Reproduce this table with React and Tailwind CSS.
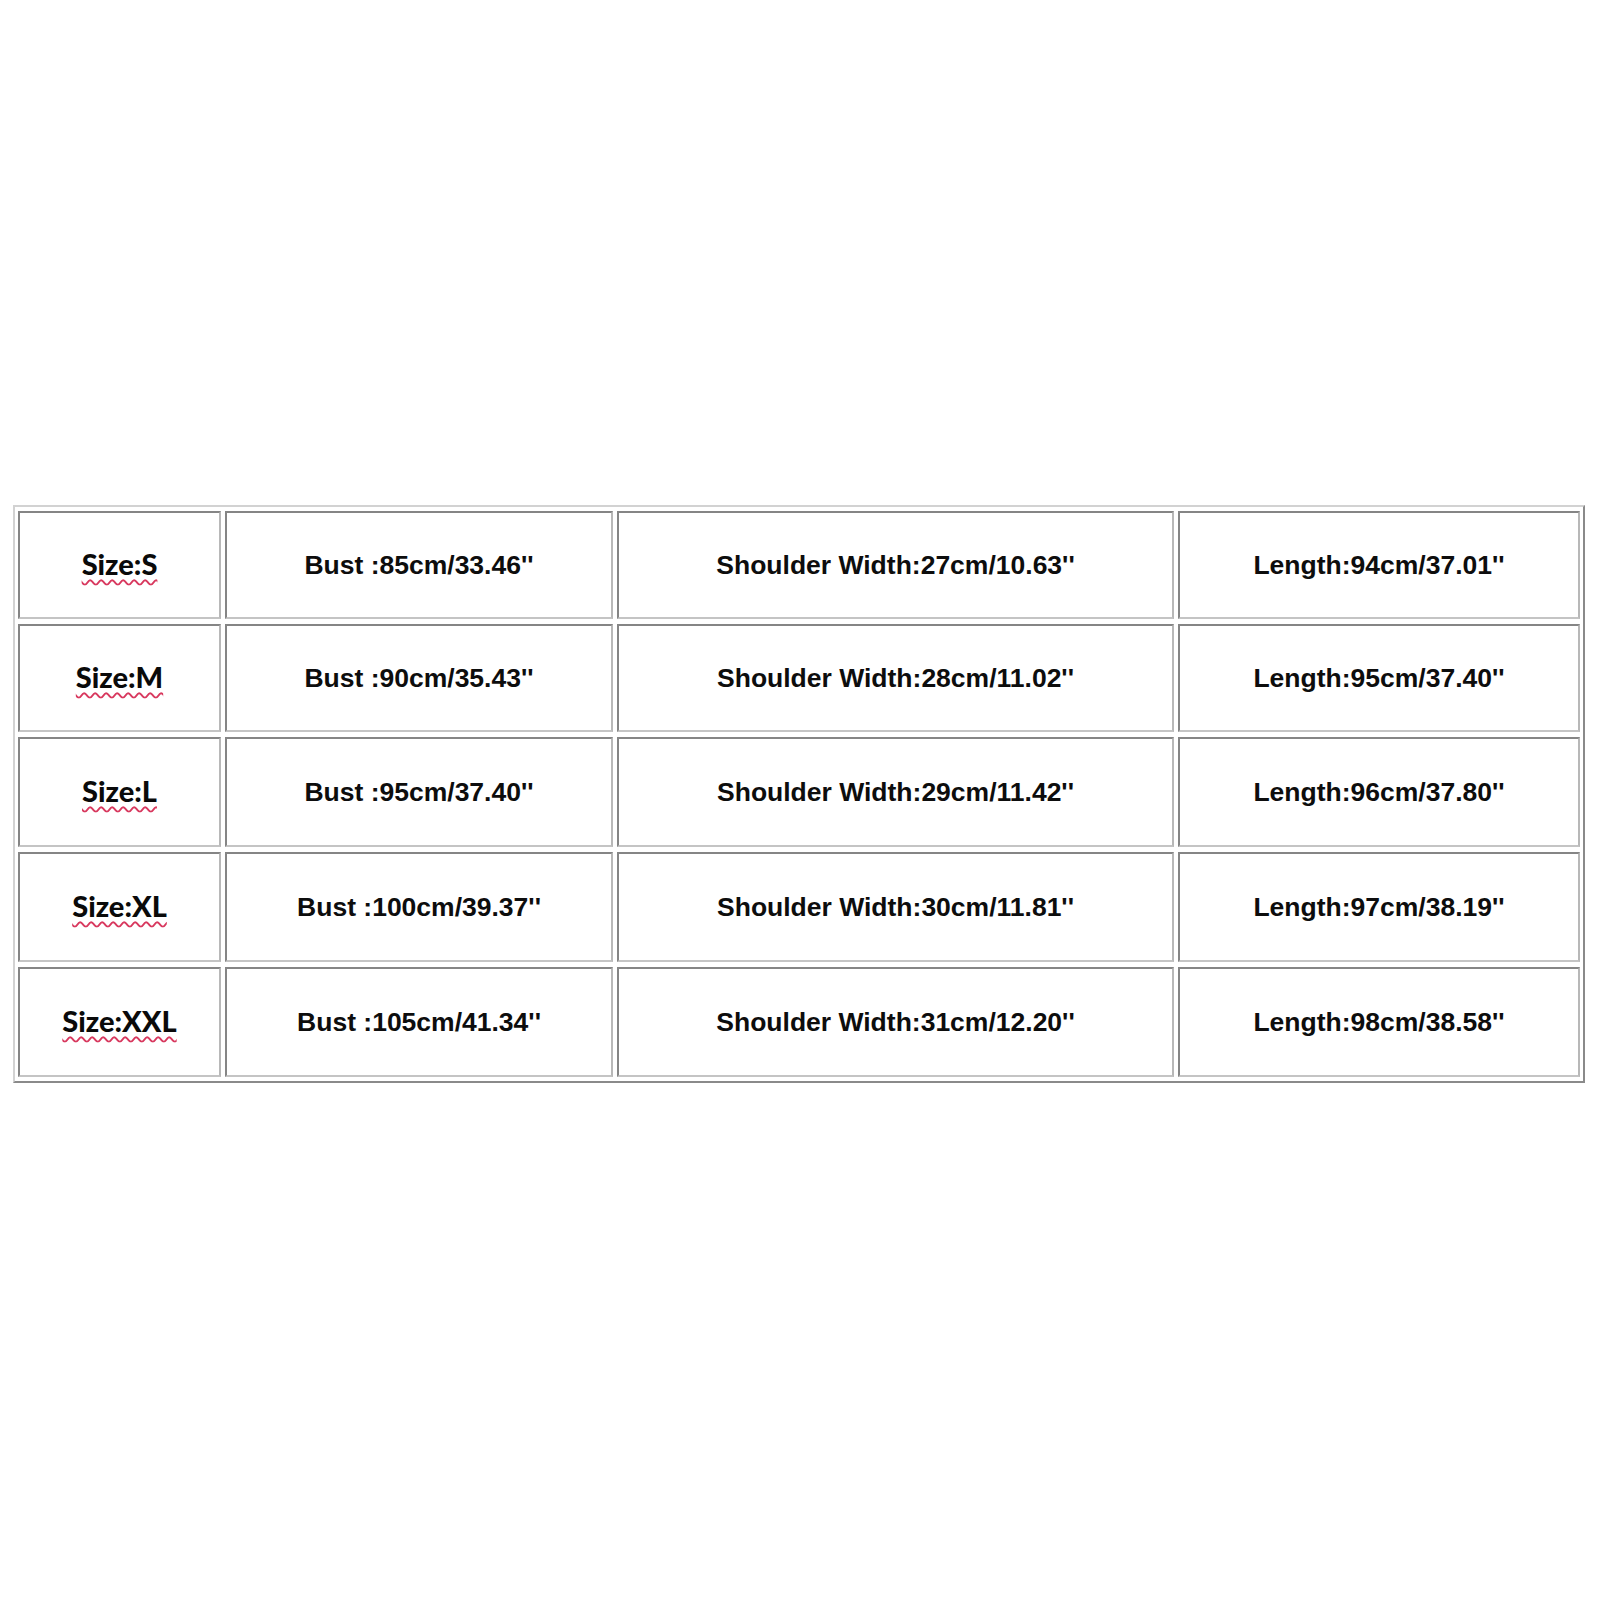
import React from "react";

const rows = [
  { size: "Size:S", bust: "Bust :85cm/33.46''", sh: "Shoulder Width:27cm/10.63''", len: "Length:94cm/37.01''", h: "h-[108px]" },
  { size: "Size:M", bust: "Bust :90cm/35.43''", sh: "Shoulder Width:28cm/11.02''", len: "Length:95cm/37.40''", h: "h-[108px]" },
  { size: "Size:L", bust: "Bust :95cm/37.40''", sh: "Shoulder Width:29cm/11.42''", len: "Length:96cm/37.80''", h: "h-[110px]" },
  { size: "Size:XL", bust: "Bust :100cm/39.37''", sh: "Shoulder Width:30cm/11.81''", len: "Length:97cm/38.19''", h: "h-[110px]" },
  { size: "Size:XXL", bust: "Bust :105cm/41.34''", sh: "Shoulder Width:31cm/12.20''", len: "Length:98cm/38.58''", h: "h-[110px]" },
];

function Cell({ w, children }) {
  return (
    <div
      className={`${w} h-full flex items-center justify-center border-2 border-t-[#858585] border-l-[#858585] border-b-[#c4c4c4] border-r-[#b8b8b8] bg-white`}
    >
      {children}
    </div>
  );
}

export default function App() {
  return (
    <div className="w-[1600px] h-[1600px] bg-white pt-[505px] pl-[13px]">
      <div className="w-[1572px] flex flex-col gap-[5px] pt-[4px] pb-[4px] pl-[3px] pr-[3px] border-2 border-t-[#d2d2d2] border-l-[#d2d2d2] border-b-[#8a8a8a] border-r-[#8a8a8a]">
        {rows.map((r, i) => (
          <div key={i} className={`flex gap-[4px] ${r.h}`}>
            <Cell w="w-[203px]">
              <span
                className="mb-[4px] text-[29px] font-black text-[#0a0a0a] underline decoration-wavy decoration-[#d8385e] decoration-[1.5px] underline-offset-[4px] leading-none"
                style={{ fontFamily: "Lato, 'Open Sans', sans-serif" }}
              >
                {r.size}
              </span>
            </Cell>
            <Cell w="w-[388px]">
              <span className="text-[26.5px] font-bold text-[#0d0d0d] leading-none font-['Liberation_Sans',Arial,sans-serif]">
                {r.bust}
              </span>
            </Cell>
            <Cell w="w-[557px]">
              <span className="text-[26.5px] font-bold text-[#0d0d0d] leading-none font-['Liberation_Sans',Arial,sans-serif]">
                {r.sh}
              </span>
            </Cell>
            <Cell w="w-[402px]">
              <span className="text-[26.5px] font-bold text-[#0d0d0d] leading-none font-['Liberation_Sans',Arial,sans-serif]">
                {r.len}
              </span>
            </Cell>
          </div>
        ))}
      </div>
    </div>
  );
}
